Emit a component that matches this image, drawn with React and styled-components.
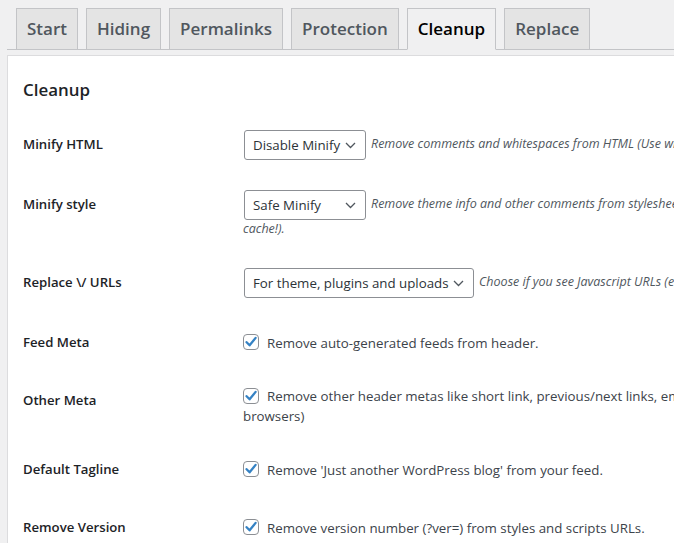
import React from "react";
import styled, { createGlobalStyle } from "styled-components";

const GlobalStyle = createGlobalStyle`
  body {
    margin: 0;
    background: #f0f0f1;
    font-family: "Open Sans", "Noto Sans", sans-serif;
    overflow: hidden;
  }
`;

const Page = styled.div`
  width: 1400px;
  padding: 8px 0 0 7px;
`;

const TabBar = styled.nav`
  display: flex;
  gap: 8px;
  padding-left: 9px;
  height: 41px;
  border-bottom: 1px solid #c3c4c7;
`;

const Tab = styled.a`
  display: block;
  box-sizing: border-box;
  height: 42px;
  padding: 5px 10px;
  border: 1px solid #c3c4c7;
  border-bottom-color: ${(p) => (p.$active ? "#f0f0f1" : "#c3c4c7")};
  background: ${(p) => (p.$active ? "#f0f0f1" : "#e4e4e4")};
  color: ${(p) => (p.$active ? "#000" : "#50575e")};
  font-size: 17px;
  font-weight: 600;
  line-height: 30px;
  text-decoration: none;
  white-space: nowrap;
`;

const Panel = styled.div`
  margin-top: 5px;
  background: #fff;
  border: 1px solid #dcdcde;
  padding: 22px 15px 0;
`;

const Title = styled.h2`
  margin: 0 0 13px;
  font-size: 16.9px;
  font-weight: 600;
  line-height: 24px;
  color: #1d2327;
`;

const Table = styled.table`
  border-collapse: collapse;
`;

const Label = styled.th`
  width: 200px;
  padding: 20px 10px 20px 0;
  vertical-align: top;
  text-align: left;
  font-size: 13.2px;
  font-weight: 600;
  line-height: 18px;
  color: #1d2327;
  white-space: nowrap;
`;

const Field = styled.td`
  padding: 15px 10px;
  vertical-align: middle;
  font-size: ${(p) => (p.$desc ? "12.5px" : "13.3px")};
  line-height: 18px;
  color: #2c3338;
  white-space: nowrap;
`;

const Select = styled.div`
  display: inline-flex;
  align-items: center;
  justify-content: space-between;
  box-sizing: border-box;
  vertical-align: middle;
  width: ${(p) => p.$width}px;
  height: 30px;
  margin: 0 5px 0 1px;
  padding: 0 9px 0 8px;
  border: 1px solid #8c8f94;
  border-radius: 3px;
  background: #fff;
  font-size: 13.3px;
  font-style: normal;
  color: #2c3338;
`;

const Description = styled.span`
  font-style: italic;
  color: #50575e;
`;

const CheckLabel = styled.label`
  display: block;
  margin-bottom: -1px;
  line-height: 20px;
  color: #3c434a;
`;

const Box = styled.span`
  display: inline-flex;
  align-items: center;
  justify-content: center;
  box-sizing: border-box;
  width: 16px;
  height: 16px;
  margin: -3px 8px 0 0;
  vertical-align: middle;
  border: 1px solid #8c8f94;
  border-radius: 4px;
  background: #fff;
`;

const Chevron = () => (
  <svg width="11" height="7" viewBox="0 0 11 7">
    <polyline points="1,1 5.5,5.5 10,1" fill="none" stroke="#50575e" strokeWidth="1.3" />
  </svg>
);

const Check = () => (
  <svg width="14" height="14" viewBox="0 0 14 14">
    <path d="M2.6 7.2 L5.6 10.3 L11.6 2.9" fill="none" stroke="#3582c4" strokeWidth="2.3" strokeLinecap="round" strokeLinejoin="round" />
  </svg>
);

const tabs = ["Start", "Hiding", "Permalinks", "Protection", "Cleanup", "Replace"];

const selects = [
  {
    label: "Minify HTML",
    value: "Disable Minify",
    width: 122,
    desc: ["Remove comments and whitespaces from HTML (Use with caution, test your site after enabling)."],
  },
  {
    label: "Minify style",
    value: "Safe Minify",
    width: 122,
    desc: [
      "Remove theme info and other comments from stylesheets (Use with caution, and remember to clear your",
      "cache!).",
    ],
  },
  {
    label: "Replace \\/ URLs",
    value: "For theme, plugins and uploads",
    width: 230,
    desc: ["Choose if you see Javascript URLs (e.g. ajax) with backslashes \\/ in your page source."],
  },
];

const checks = [
  { label: "Feed Meta", text: ["Remove auto-generated feeds from header."] },
  {
    label: "Other Meta",
    text: [
      "Remove other header metas like short link, previous/next links, emoji scripts, RSD and WLW manifest (used by old",
      "browsers)",
    ],
  },
  { label: "Default Tagline", text: ["Remove 'Just another WordPress blog' from your feed."] },
  { label: "Remove Version", text: ["Remove version number (?ver=) from styles and scripts URLs."] },
];

export default function App() {
  return (
    <>
      <GlobalStyle />
      <Page>
        <TabBar>
          {tabs.map((t) => (
            <Tab key={t} href="#" $active={t === "Cleanup"}>
              {t}
            </Tab>
          ))}
        </TabBar>
        <Panel>
          <Title>Cleanup</Title>
          <Table>
            <tbody>
              {selects.map((s) => (
                <tr key={s.label}>
                  <Label>{s.label}</Label>
                  <Field $desc>
                    <Select $width={s.width}>
                      <span>{s.value}</span>
                      <Chevron />
                    </Select>
                    <Description>
                      {s.desc[0]}
                      {s.desc[1] && (
                        <>
                          <br />
                          {s.desc[1]}
                        </>
                      )}
                    </Description>
                  </Field>
                </tr>
              ))}
              {checks.map((c) => (
                <tr key={c.label}>
                  <Label>{c.label}</Label>
                  <Field>
                    <CheckLabel>
                      <Box>
                        <Check />
                      </Box>
                      {c.text[0]}
                      {c.text[1] && (
                        <>
                          <br />
                          {c.text[1]}
                        </>
                      )}
                    </CheckLabel>
                  </Field>
                </tr>
              ))}
            </tbody>
          </Table>
        </Panel>
      </Page>
    </>
  );
}
